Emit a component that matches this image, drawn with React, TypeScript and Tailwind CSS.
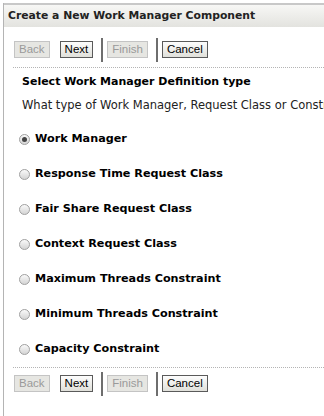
import { useState } from "react";

const opciones = [
  "Work Manager",
  "Response Time Request Class",
  "Fair Share Request Class",
  "Context Request Class",
  "Maximum Threads Constraint",
  "Minimum Threads Constraint",
  "Capacity Constraint",
];

function Botonera() {
  const boton =
    "h-[17px] px-[4px] border text-[11.5px] leading-[15px] font-['Liberation_Sans',Arial,sans-serif]";
  const activo = `${boton} border-[#5a5a5a] bg-gradient-to-b from-[#fdfdfd] to-[#e0e0da] text-black`;
  const inactivo = `${boton} border-[#c4c4c4] bg-[#e6e6e2] text-[#9a9a9a]`;

  return (
    <div className="flex items-center h-[31px] pl-[10px]">
      <button className={inactivo}>Back</button>
      <button className={`${activo} ml-[10px]`}>Next</button>
      <div className="w-[2px] h-[24px] bg-[#6e6e6e] ml-[8px]" />
      <button className={`${inactivo} ml-[4px]`}>Finish</button>
      <div className="w-[2px] h-[24px] bg-[#6e6e6e] ml-[8px]" />
      <button className={`${activo} ml-[4px]`}>Cancel</button>
    </div>
  );
}

export default function App() {
  const [tipo, setTipo] = useState("Work Manager");

  return (
    <div className="w-[324px] h-[416px] bg-white overflow-hidden pt-[3px] font-['DejaVu_Sans',Verdana,sans-serif]">
      <div className="ml-[3px] h-[413px] border-l border-[#b4b4b4]">
        {/* ----------- TITULO ------------ */}
        <div className="h-[24px] border-t-2 border-[#c8c8c8] bg-gradient-to-b from-[#f7f7f5] to-[#e3e3df] pl-[4px] text-[10.8px] leading-[21px] font-bold text-[#222]">
          Create a New Work Manager Component
        </div>

        <div className="pt-[7px]">
          <Botonera />
        </div>

        <div className="ml-[9px] mt-[2px] border-t border-dotted border-[#b4b4b4]" />

        <div className="pl-[18px] pt-[6px]">
          <div className="text-[11px] leading-[16px] font-bold text-black">
            Select Work Manager Definition type
          </div>
          <div className="mt-[7px] text-[11.5px] leading-[16px] text-[#222] whitespace-nowrap overflow-hidden">
            What type of Work Manager, Request Class or Constraint would you like to create?
          </div>
        </div>

        {/* ----------- OPCIONES ------------ */}
        <div className="pl-[15px] pt-[9px]">
          {opciones.map((op) => (
            <label key={op} className="flex items-center h-[35px] cursor-pointer">
              <span
                className="w-[11px] h-[11px] rounded-full border border-[#a0a0a0] bg-gradient-to-b from-[#fafafa] to-[#d4d4d4] flex items-center justify-center"
                onClick={() => setTipo(op)}
              >
                {tipo === op && <span className="w-[5px] h-[5px] rounded-full bg-[#444]" />}
              </span>
              <span className="ml-[5px] text-[11.2px] font-bold text-black">{op}</span>
            </label>
          ))}
        </div>

        <div className="ml-[9px] border-t border-dotted border-[#b4b4b4]" />

        <div>
          <Botonera />
        </div>
      </div>
    </div>
  );
}
